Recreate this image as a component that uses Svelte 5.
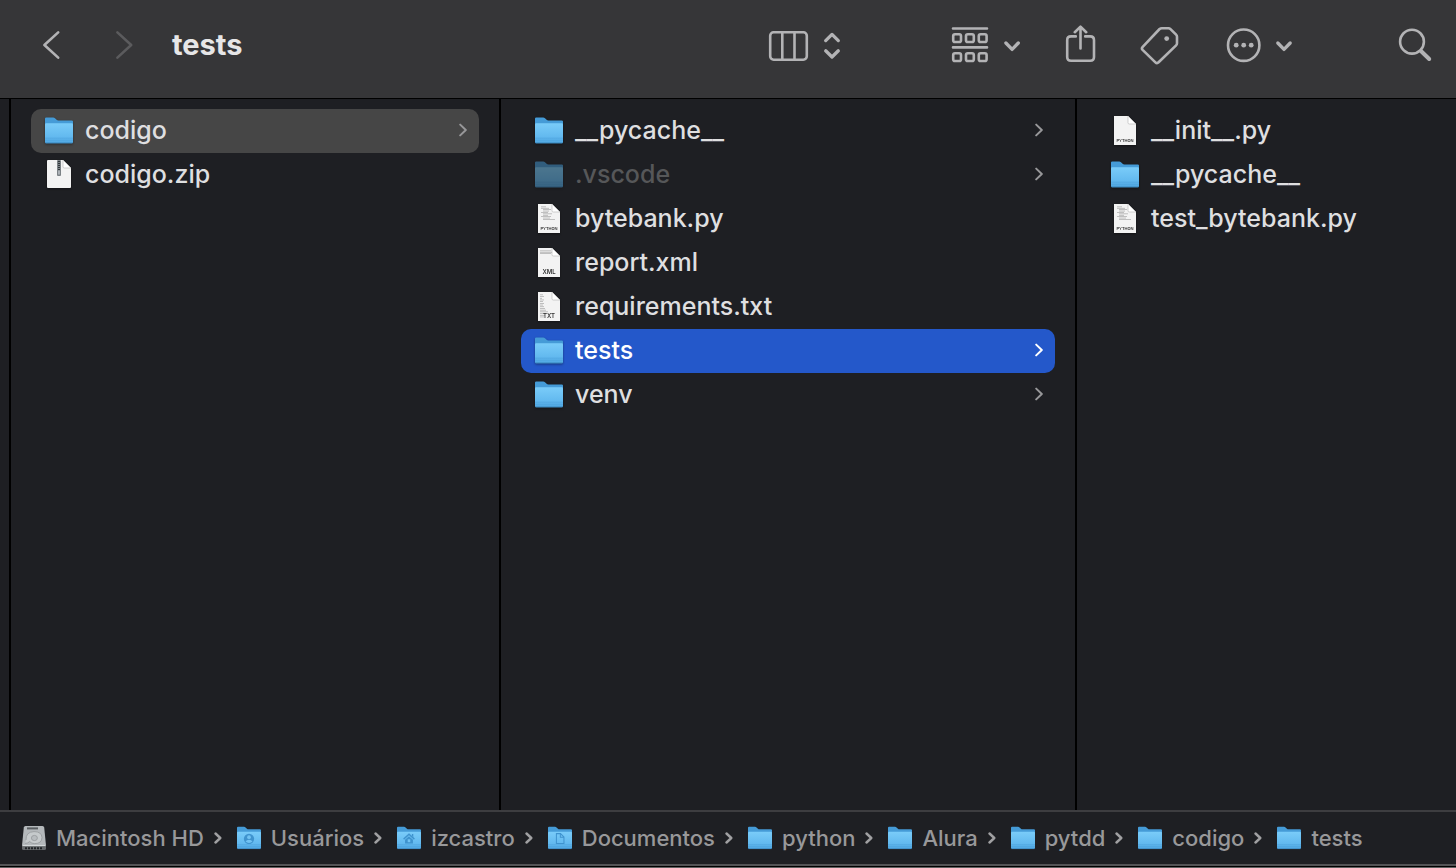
<script>
    const columns = [
        {
            label: 'pytdd',
            items: [
                { name: 'codigo', kind: 'folder' },
                { name: 'codigo.zip', kind: 'zip' },
            ],
        },
        {
            label: 'codigo',
            items: [
                { name: '__pycache__', kind: 'folder' },
                { name: '.vscode', kind: 'folder', hidden: true },
                { name: 'bytebank.py', kind: 'doc', tag: 'PYTHON', preview: 'code' },
                { name: 'report.xml', kind: 'doc', tag: 'XML', preview: 'header' },
                { name: 'requirements.txt', kind: 'doc', tag: 'TXT', preview: 'list' },
                { name: 'tests', kind: 'folder' },
                { name: 'venv', kind: 'folder' },
            ],
        },
        {
            label: 'tests',
            items: [
                { name: '__init__.py', kind: 'doc', tag: 'PYTHON' },
                { name: '__pycache__', kind: 'folder', plain: true },
                { name: 'test_bytebank.py', kind: 'doc', tag: 'PYTHON', preview: 'code' },
            ],
        },
    ];

    const path = [
        { name: 'Macintosh HD', icon: 'disk' },
        { name: 'Usuários', icon: 'users' },
        { name: 'izcastro', icon: 'home' },
        { name: 'Documentos', icon: 'documents' },
        { name: 'python', icon: 'folder' },
        { name: 'Alura', icon: 'folder' },
        { name: 'pytdd', icon: 'folder' },
        { name: 'codigo', icon: 'folder' },
        { name: 'tests', icon: 'folder' },
    ];

    // lines of the tiny page previews: [x, width]
    const previews = {
        code: [[3, 5], [3, 8], [5, 8], [5, 6], [3, 7], [5, 9], [5, 5], [3, 10], [5, 7], [5, 12]],
        header: [[2, 11], [2, 12], [2, 11]],
        list: [[2, 3], [2, 4], [2, 2], [2, 4], [2, 3], [2, 4], [2, 3], [2, 4], [2, 5], [2, 6], [2, 8], [2, 7], [2, 5], [2, 4]],
    };

    let selected = $state(['codigo', 'tests', '']);
    let active = $state(1);

    function select(column, name) {
        selected[column] = name;
        active = column;
    }
</script>

<svelte:head>
    <title>tests</title>
</svelte:head>

{#snippet folder(glyph)}
    <svg class="folder" viewBox="0 0 28 27" aria-hidden="true">
        <defs>
            <linearGradient id="folder-front" x1="0" y1="0" x2="0" y2="1">
                <stop offset="0" stop-color="#7accf9" />
                <stop offset="0.75" stop-color="#60b7ee" />
                <stop offset="1" stop-color="#4ea5e0" />
            </linearGradient>
        </defs>
        <path d="M0 1.6Q0 .4 1.2 .4H8.2Q9.2 .4 10 1.2L11.6 2.7Q12.3 3.4 13.4 3.4H26.8Q28 3.4 28 4.6V12H0Z" fill="#459bd7" />
        <path d="M0 7.4Q0 6.3 1.1 6.3H26.9Q28 6.3 28 7.4V25Q28 26.3 26.7 26.3H1.3Q0 26.3 0 25Z" fill="url(#folder-front)" />
        <path d="M0 21.2H28M0 23.2H28" stroke="#4397d3" stroke-width=".6" opacity=".7" />
        <path d="M.5 25.9H27.5" stroke="#3b86bd" stroke-width=".8" />
        {#if glyph === 'users'}
            <circle cx="14" cy="14.4" r="6" fill="#3f93ce" />
            <circle cx="14" cy="12.5" r="2.2" fill="#72c3f3" />
            <path d="M10 17.6Q11.2 15.5 14 15.5T18 17.6Q16.4 19.2 14 19.2T10 17.6Z" fill="#72c3f3" />
        {:else if glyph === 'home'}
            <path d="M14 8L20.8 14.2L19.8 15.4L14 10.2L8.2 15.4L7.2 14.2Z" fill="#3f93ce" />
            <path d="M14 11.4L18.6 15.5V20H9.4V15.5Z" fill="#3f93ce" />
            <rect x="12.5" y="15" width="3" height="3.4" fill="#72c3f3" />
            <path d="M17.4 8.8H19V12.6L17.4 11Z" fill="#3f93ce" />
        {:else if glyph === 'documents'}
            <path d="M9.8 8.4H14.6L18.6 12.4V20H9.8Z" fill="none" stroke="#3f93ce" stroke-width="1.2" />
            <path d="M14.4 8.4V12.6H18.6" fill="none" stroke="#3f93ce" stroke-width="1.2" />
        {/if}
    </svg>
{/snippet}

{#snippet doc(item)}
    <svg class="doc" viewBox="0 0 22 29" aria-hidden="true">
        <path d="M0 0H14L22 8V29H0Z" fill="#f3f3f3" />
        {#each previews[item.preview] ?? [] as [x, width], i}
            <rect {x} y={2.5 + i * (item.preview === 'list' ? 1.7 : 1.4)} {width} height=".7" fill="#a8a8a8" />
        {/each}
        <path d="M14 0V6.8Q14 8 15.2 8H22Z" fill="#fff" stroke="#b4b4b4" stroke-width=".6" />
        <text class:wide={item.tag === 'PYTHON'} x="11" y="26" text-anchor="middle">{item.tag}</text>
    </svg>
{/snippet}

{#snippet zip()}
    <svg class="zip" viewBox="0 0 24 28" aria-hidden="true">
        <path d="M1 0H16L24 8V27Q24 28 23 28H1Q0 28 0 27V1Q0 0 1 0Z" fill="#f3f3f3" />
        <path d="M16 0V6.8Q16 8 17.2 8H24Z" fill="#fff" stroke="#b4b4b4" stroke-width=".6" />
        <rect x="10" y="0" width="4" height="16" rx="1" fill="#7c8286" />
        <path d="M12 1V10" stroke="#32373b" stroke-width="2" stroke-dasharray="1 1" />
        <rect x="11.2" y="10.5" width="1.6" height="4" fill="#b9bec2" />
    </svg>
{/snippet}

{#snippet disk()}
    <svg class="disk" viewBox="0 0 24 25" aria-hidden="true">
        <path d="M3.5 0H20.5Q22 0 22.2 1.5L24 19.5H0L1.8 1.5Q2 0 3.5 0Z" fill="#b4b8bb" />
        <path d="M0 19.3H24V22.5Q24 24 22.5 24H1.5Q0 24 0 22.5Z" fill="#66696c" />
        <path d="M.4 19.6H23.6" stroke="#e1e4e6" stroke-width="1" />
        <rect x="5" y="1.4" width="11" height="2" fill="#595d60" />
        <path d="M4 14Q3.6 6 12 5.6Q19.6 5.6 20 11.4Q20 17.6 12.6 17.6Q9.6 17.6 7.6 15.6Q6 17.4 3 17.4" fill="#c6cacc" stroke="#94989b" stroke-width=".8" />
        <ellipse cx="12.4" cy="12" rx="3" ry="2.6" fill="#b8bcbf" stroke="#94989b" stroke-width=".8" />
        <path d="M3 22.2H21" stroke="#212427" stroke-width="2" stroke-dasharray="2 1" />
    </svg>
{/snippet}

<div class="window">
    <header class="toolbar">
        <button class="tool" aria-label="Back">
            <svg width="20" height="40" viewBox="0 0 20 40"><path d="M16.2 7.4L2.4 20L16.2 32.6" /></svg>
        </button>
        <button class="tool forward" aria-label="Forward" disabled>
            <svg width="20" height="40" viewBox="0 0 20 40"><path d="M3.4 7.4L17.2 20L3.4 32.6" /></svg>
        </button>
        <h1>tests</h1>

        <div class="tools">
            <button class="tool view" aria-label="View as columns">
                <svg width="74" height="40" viewBox="0 0 74 40">
                    <rect x="2.2" y="7.3" width="36.6" height="27.4" rx="3.4" />
                    <path d="M14.3 7.3V34.7M26.5 7.3V34.7" />
                    <path class="chevron" d="M57.7 15.6L64 9.4L70.3 15.6M57.7 25.8L64 32L70.3 25.8" />
                </svg>
            </button>
            <button class="tool" aria-label="Group items">
                <svg width="70" height="40" viewBox="0 0 70 40">
                    <path d="M2 3.5H36M2 22.4H36" />
                    {#each [9.2, 28.2] as y}
                        {#each [2.2, 15, 27.8] as x}
                            <rect {x} {y} width="7.8" height="7.8" rx="1.8" />
                        {/each}
                    {/each}
                    <path class="chevron" d="M54.9 18L61.1 24.4L67.3 18" />
                </svg>
            </button>
            <button class="tool" aria-label="Share">
                <svg width="31" height="40" viewBox="0 0 31 40">
                    <path d="M10.8 11.4H6Q2.2 11.4 2.2 15.2V32Q2.2 35.8 6 35.8H25.2Q29 35.8 29 32V15.2Q29 11.4 25.2 11.4H20.2" />
                    <path d="M15.5 23.4V1.8M9.8 7.2L15.5 1.6L21.2 7.2" />
                </svg>
            </button>
            <button class="tool" aria-label="Edit tags">
                <svg width="41" height="40" viewBox="0 0 41 40">
                    <path d="M19.6 4Q20.6 3.2 21.8 3.2H28.4Q29.6 3.2 30.5 4.1L36.1 9.7Q37 10.6 37 11.8V18.3Q37 19.5 36.1 20.4L18.6 37.3Q17 38.9 15.4 37.3L2.6 24.9Q1.2 23.4 2.7 21.8Z" />
                    <circle class="dot" cx="26.7" cy="13.6" r="2.4" />
                </svg>
            </button>
            <button class="tool" aria-label="More actions">
                <svg width="68" height="40" viewBox="0 0 68 40">
                    <circle cx="18.7" cy="20.2" r="15.7" />
                    <circle class="dot" cx="11.2" cy="20.2" r="2.4" />
                    <circle class="dot" cx="18.7" cy="20.2" r="2.4" />
                    <circle class="dot" cx="26.2" cy="20.2" r="2.4" />
                    <path class="chevron" d="M52.8 18L59 24.4L65.2 18" />
                </svg>
            </button>
            <button class="tool search" aria-label="Search">
                <svg width="35" height="40" viewBox="0 0 35 40">
                    <circle cx="14" cy="16.7" r="11.9" />
                    <path class="handle" d="M23.2 26.2L31.2 34" />
                </svg>
            </button>
        </div>
    </header>

    <main class="browser">
        {#each columns as column, c}
            <ul class="column" aria-label={column.label}>
                {#each column.items as item}
                    <li>
                        <button
                            class="row"
                            class:selected={selected[c] === item.name}
                            class:active={selected[c] === item.name && active === c}
                            class:hidden={item.hidden}
                            onclick={() => select(c, item.name)}
                        >
                            <span class="icon">
                                {#if item.kind === 'folder'}
                                    {@render folder()}
                                {:else if item.kind === 'zip'}
                                    {@render zip()}
                                {:else}
                                    {@render doc(item)}
                                {/if}
                            </span>
                            <span class="name">{item.name}</span>
                            {#if item.kind === 'folder' && !item.plain}
                                <svg class="arrow" viewBox="0 0 8 14" aria-hidden="true"><path d="M1.2 1.6L6.8 7L1.2 12.4" /></svg>
                            {/if}
                        </button>
                    </li>
                {/each}
            </ul>
        {/each}
    </main>

    <nav class="path" aria-label="Path">
        {#each path as step, i}
            {#if i > 0}
                <svg class="separator" viewBox="0 0 8 12" aria-hidden="true"><path d="M1.5 1.5L6.3 6L1.5 10.5" /></svg>
            {/if}
            <a href="#{step.name}">
                {#if step.icon === 'disk'}
                    {@render disk()}
                {:else}
                    {@render folder(step.icon)}
                {/if}
                <span>{step.name}</span>
            </a>
        {/each}
    </nav>
</div>

<style>
    :global(body) {
        background: #1e1f23;
    }

    .window {
        display: flex;
        flex-direction: column;
        height: 100vh;
        box-sizing: border-box;
        border-bottom: 1px solid #606060;
        color: #dfdfe0;
        font-family: Inter, "Liberation Sans", sans-serif;
        overflow: hidden;
    }

    button {
        margin: 0;
        padding: 0;
        border: 0;
        background: none;
        color: inherit;
        font: inherit;
        text-align: left;
    }

    .toolbar {
        display: flex;
        align-items: center;
        height: 90px;
        flex: none;
        padding: 0 23px 8px 42px;
        background: #363638;
        border-bottom: 1px solid #000;
    }

    .tool {
        display: block;
        flex: none;
    }

    .tool svg {
        display: block;
        fill: none;
        stroke: #b3b3b5;
        stroke-width: 2.6;
        stroke-linecap: round;
        stroke-linejoin: round;
    }

    .tool .chevron {
        stroke-width: 3.3;
    }

    .tool .handle {
        stroke-width: 4;
    }

    .tool .dot {
        fill: #b3b3b5;
        stroke: none;
    }

    .forward {
        margin-left: 52px;
    }

    .forward svg {
        stroke: #5b5b5d;
    }

    h1 {
        margin: 0 0 0 38px;
        font-size: 29px;
        line-height: 36px;
        font-weight: 700;
        color: #e6e6e7;
    }

    .tools {
        display: flex;
        gap: 44px;
        margin-left: auto;
    }

    .view {
        margin-right: 65px;
    }

    .search {
        margin-left: 61px;
    }

    .browser {
        flex: 1;
        min-height: 0;
        display: grid;
        grid-template-columns: 490fr 576fr 381fr;
        padding-left: 9px;
    }

    .column {
        margin: 0;
        padding: 10px 20px;
        min-width: 0;
        border-left: 2px solid #000;
        list-style: none;
    }

    .row {
        display: flex;
        align-items: center;
        box-sizing: border-box;
        width: 100%;
        height: 44px;
        padding: 0 12px 2px 14px;
        border-radius: 10px;
        font-size: 25px;
        font-weight: 500;
    }

    .row.selected {
        background: #464646;
    }

    .row.active {
        background: #2458ca;
        color: #fff;
    }

    .icon {
        display: flex;
        justify-content: center;
        flex: none;
        width: 28px;
        margin-right: 12px;
    }

    .icon svg {
        filter: drop-shadow(0 1px 1px rgba(0, 0, 0, 0.4));
    }

    .folder {
        width: 28px;
        height: 27px;
    }

    .doc {
        width: 22px;
        height: 29px;
    }

    .doc text {
        font-size: 6px;
        font-weight: 600;
        fill: #333;
    }

    .doc text.wide {
        font-size: 4px;
    }

    .zip {
        width: 24px;
        height: 28px;
    }

    .name {
        flex: 1;
        min-width: 0;
        line-height: 32px;
        white-space: nowrap;
    }

    .hidden .icon {
        opacity: 0.5;
    }

    .hidden .name {
        color: #565759;
    }

    .arrow {
        flex: none;
        width: 8px;
        height: 14px;
        fill: none;
        stroke: #98989a;
        stroke-width: 2;
        stroke-linecap: round;
        stroke-linejoin: round;
    }

    .active .arrow {
        stroke: #fff;
    }

    .path {
        display: flex;
        align-items: center;
        flex: none;
        height: 52px;
        padding-left: 22px;
        border-top: 2px solid #3d3d40;
        border-bottom: 2px solid #545456;
        box-shadow: 0 1px #000;
        margin-bottom: 1px;
        white-space: nowrap;
    }

    .path a {
        display: flex;
        align-items: center;
        gap: 10px;
        color: #98989a;
        font-size: 22px;
        line-height: 28px;
        font-weight: 500;
        text-decoration: none;
    }

    .path .folder {
        width: 24px;
        height: 24px;
    }

    .disk {
        width: 24px;
        height: 25px;
    }

    .separator {
        flex: none;
        width: 8px;
        height: 12px;
        margin: 0 15px 0 10px;
        fill: none;
        stroke: #a0a0a2;
        stroke-width: 2.4;
        stroke-linecap: round;
        stroke-linejoin: round;
    }
</style>
